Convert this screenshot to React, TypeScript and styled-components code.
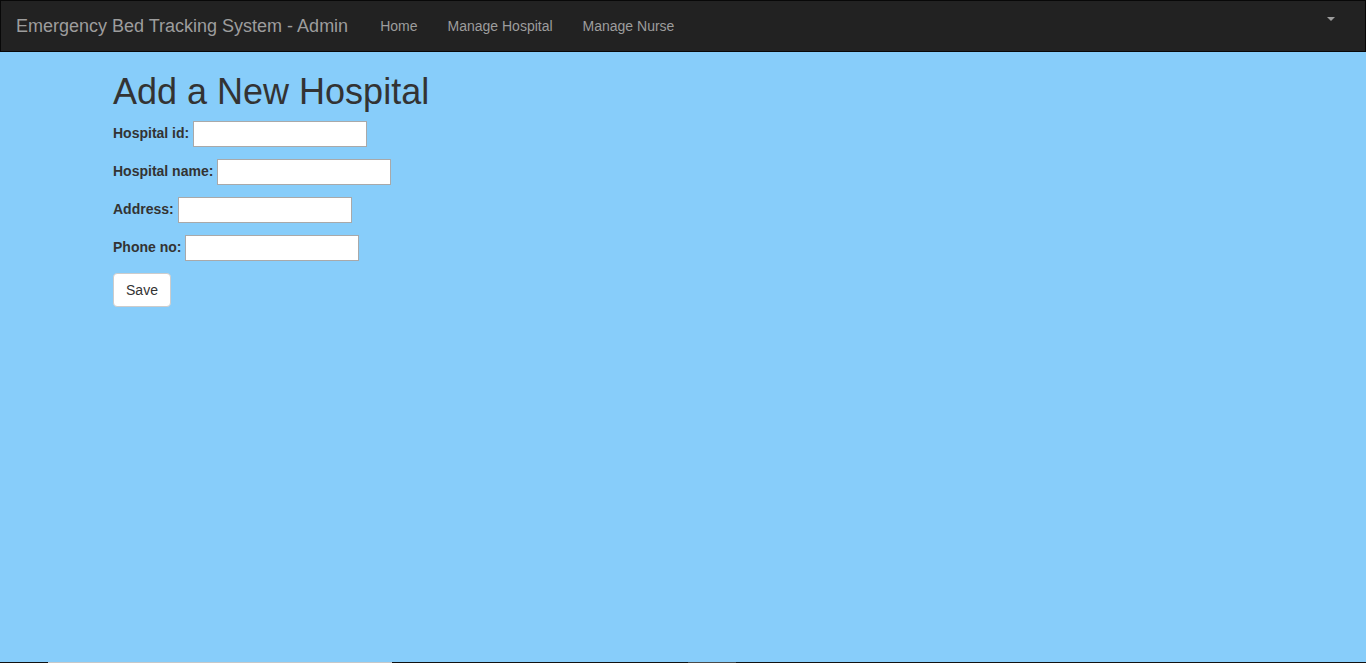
import React from "react";
import styled, { createGlobalStyle } from "styled-components";

const GlobalStyle = createGlobalStyle`
  html, body { margin: 0; padding: 0; height: 100%; }
  body {
    font-family: "Liberation Sans", Arial, Helvetica, sans-serif;
    font-size: 14px;
    line-height: 1.42857;
    color: #333;
    background: #87cdfa;
  }
  #root { height: 100%; }
  * { box-sizing: border-box; }
`;

const Page = styled.div`
  display: flex;
  flex-direction: column;
  height: 663px;
`;

const NavBar = styled.nav`
  display: flex;
  align-items: stretch;
  height: 52px;
  background: #222;
  border: 1px solid #080808;
  padding: 0 15px 0 0;
  flex-shrink: 0;
`;

const Brand = styled.a`
  display: block;
  padding: 15px 17px 15px 15px;
  height: 50px;
  font-size: 18px;
  line-height: 20px;
  color: #9d9d9d;
  text-decoration: none;
`;

const NavList = styled.ul<{ $grow?: boolean }>`
  display: flex;
  list-style: none;
  margin: 0;
  padding: 0;
  flex: ${(p) => (p.$grow ? 1 : "none")};
`;

const NavLink = styled.a`
  display: flex;
  align-items: center;
  padding: 15px;
  line-height: 20px;
  color: #9d9d9d;
  text-decoration: none;
  font-size: 14px;
`;

const CaretLink = styled.a`
  display: block;
  padding: 16px 15px 0 15px;
  height: 50px;
`;

const Caret = styled.span`
  display: block;
  width: 0;
  height: 0;
  border-top: 4px solid #9d9d9d;
  border-left: 4px solid transparent;
  border-right: 4px solid transparent;
`;

const Main = styled.main`
  flex: 1;
  width: 1170px;
  margin: 0 auto;
  padding: 0 15px;
`;

const Title = styled.h2`
  font-size: 36px;
  font-weight: 500;
  line-height: 1.1;
  margin: 20px 0 9px;
  color: #333;
`;

const Form = styled.form`
  display: flex;
  flex-direction: column;
  align-items: flex-start;
  gap: 12px;
`;

const Row = styled.div`
  display: flex;
  align-items: center;
  gap: 4px;
  height: 26px;
`;

const Label = styled.label`
  font-weight: bold;
  font-size: 14px;
  color: #333;
`;

const Input = styled.input`
  width: 174px;
  height: 26px;
  border: 1px solid #a9a9a9;
  background: #fff;
  padding: 1px 2px;
  font-size: 13px;
  font-family: inherit;
`;

const Button = styled.button`
  width: 58px;
  height: 34px;
  padding: 6px 12px;
  font-size: 14px;
  line-height: 20px;
  font-family: inherit;
  color: #333;
  background: #fff;
  border: 1px solid #ccc;
  border-radius: 4px;
`;

const BottomStrip = styled.div`
  display: flex;
  height: 1px;
  background: #111;
  flex-shrink: 0;
`;

const StripSeg = styled.div<{ $w: number; $c: string }>`
  width: ${(p) => p.$w}px;
  background: ${(p) => p.$c};
`;

const fields = [
  { id: "hid", label: "Hospital id:" },
  { id: "hname", label: "Hospital name:" },
  { id: "addr", label: "Address:" },
  { id: "phone", label: "Phone no:" },
];

export default function App() {
  return (
    <>
      <GlobalStyle />
      <Page>
        <NavBar>
          <Brand href="#">Emergency Bed Tracking System - Admin</Brand>
          <NavList $grow>
            <li><NavLink href="#">Home</NavLink></li>
            <li><NavLink href="#">Manage Hospital</NavLink></li>
            <li><NavLink href="#">Manage Nurse</NavLink></li>
          </NavList>
          <NavList>
            <li>
              <CaretLink href="#"><Caret /></CaretLink>
            </li>
          </NavList>
        </NavBar>
        <Main>
          <Title>Add a New Hospital</Title>
          <Form onSubmit={(e) => e.preventDefault()}>
            {fields.map((f) => (
              <Row key={f.id}>
                <Label htmlFor={f.id}>{f.label}</Label>
                <Input id={f.id} type="text" />
              </Row>
            ))}
            <Button type="submit">Save</Button>
          </Form>
        </Main>
        <BottomStrip>
          <StripSeg $w={48} $c="#111" />
          <StripSeg $w={344} $c="#c8c8c8" />
          <StripSeg $w={296} $c="#111" />
          <StripSeg $w={48} $c="#4a4a4a" />
        </BottomStrip>
      </Page>
    </>
  );
}
